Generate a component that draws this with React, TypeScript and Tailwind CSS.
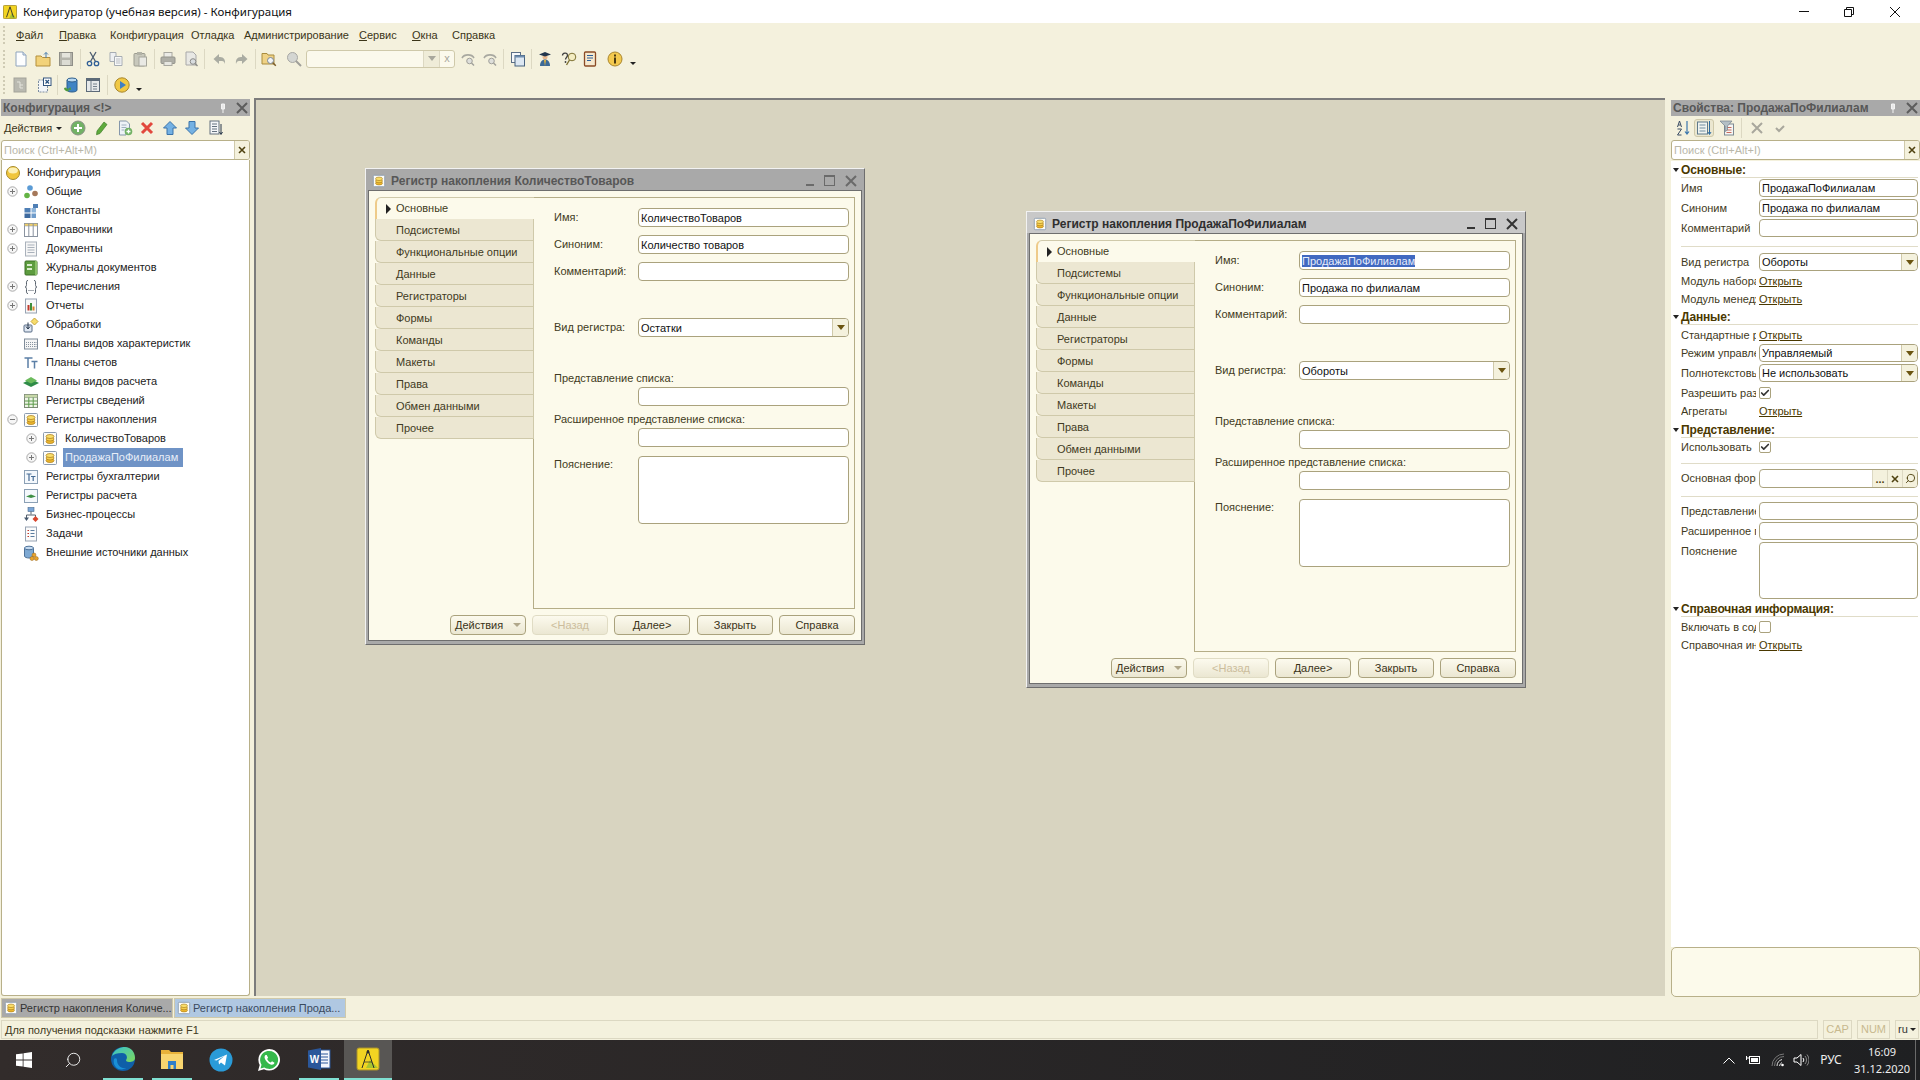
import { Check, Search } from 'lucide-react';
import type { ReactNode } from 'react';

// ---------- small drawn icons (16x16 unless noted) ----------
function Svg({ children, className = '' }: { children: ReactNode; className?: string }) {
  return (
    <svg viewBox="0 0 16 16" className={`block w-4 h-4 shrink-0 ${className}`}>
      {children}
    </svg>
  );
}

const Coins = ({ className = '' }: { className?: string }) => (
  <Svg className={className}>
    <rect x="1.5" y="1.5" width="13" height="13" rx="1" fill="#fdfdf8" stroke="#8b9bb0" />
    <ellipse cx="8" cy="10.5" rx="4" ry="2" fill="#efb92e" stroke="#a8791a" strokeWidth="0.7" />
    <ellipse cx="8" cy="8" rx="4" ry="2" fill="#f6d04d" stroke="#a8791a" strokeWidth="0.7" />
    <ellipse cx="8" cy="5.5" rx="4" ry="2" fill="#f9de6b" stroke="#a8791a" strokeWidth="0.7" />
  </Svg>
);

const treeIcons: Record<string, ReactNode> = {
  root: (
    <Svg>
      <circle cx="8" cy="8" r="6.5" fill="#f0c63c" stroke="#a68a2c" />
      <ellipse cx="8" cy="5.5" rx="4.8" ry="3" fill="#fcf0b4" />
    </Svg>
  ),
  common: (
    <Svg>
      <circle cx="7" cy="4" r="2.8" fill="#5b9bd5" />
      <circle cx="4" cy="11.5" r="2.8" fill="#64b345" />
      <circle cx="12" cy="9.5" r="2.8" fill="#a5785a" />
    </Svg>
  ),
  constants: (
    <Svg>
      <rect x="1.5" y="5" width="6" height="4.5" fill="#4f7fb5" />
      <rect x="1.5" y="10.5" width="6" height="4.5" fill="#3e6a9f" />
      <rect x="8.5" y="10.5" width="4.5" height="4.5" fill="#6f9ccb" />
      <rect x="8.5" y="5" width="4.5" height="4.5" fill="#8db4da" />
      <rect x="10" y="1" width="5" height="4" fill="#4f7fb5" />
    </Svg>
  ),
  catalogs: (
    <Svg>
      <rect x="1.5" y="1.5" width="13" height="13" fill="#fff" stroke="#8a93a0" />
      <rect x="1.5" y="1.5" width="13" height="2.5" fill="#f0cf6a" stroke="#8a93a0" strokeWidth="0.5" />
      <path d="M5.8 1.5v13M10.2 1.5v13" stroke="#8a93a0" />
    </Svg>
  ),
  docs: (
    <Svg>
      <rect x="2.5" y="1" width="11" height="14" fill="#f6f6f6" stroke="#a9b1bb" />
      <path d="M4.5 4h7M4.5 6.5h7M4.5 9h7M4.5 11.5h7" stroke="#a9b1bb" />
    </Svg>
  ),
  journals: (
    <Svg>
      <rect x="2" y="1" width="12" height="14" rx="1" fill="#5d9c3f" stroke="#3d7029" />
      <rect x="4" y="4" width="5" height="2" fill="#d8eccb" />
      <rect x="4" y="8" width="5" height="2" fill="#d8eccb" />
      <rect x="12" y="1" width="2" height="14" fill="#8bc069" />
    </Svg>
  ),
  enums: (
    <Svg>
      <path d="M5 1.5C3 1.5 3.5 3 3.5 5.5c0 1.5-.5 2.5-1.5 2.5 1 0 1.5 1 1.5 2.5 0 2.5-.5 4 1.500 4M11 1.500c2 0 1.500 1.500 1.500 4 0 1.500.5 2.500 1.500 2.500-1 0-1.500 1-1.500 2.500 0 2.500.5 4-1.500 4" fill="none" stroke="#505a66" />
      <path d="M5.500 11.500h1M7.500 11.500h1M9.500 11.500h1" stroke="#505a66" />
    </Svg>
  ),
  reports: (
    <Svg>
      <rect x="2.500" y="1" width="11" height="14" fill="#f8f8f8" stroke="#97a3b3" />
      <rect x="4.500" y="7" width="2" height="5.500" fill="#c0392b" />
      <rect x="7" y="5" width="2" height="7.500" fill="#3f8f3a" />
      <rect x="9.500" y="8.500" width="2" height="4" fill="#d9822b" />
    </Svg>
  ),
  processing: (
    <Svg>
      <rect x="1" y="8" width="8" height="7" rx="1" fill="#dfe7f2" stroke="#566b85" />
      <path d="M5 5.500v6M3 9.500l2 2.500 2-2.500" fill="none" stroke="#26364a" />
      <path d="M11.500 1l3.500 3.500-3.500 3.500L8 4.500z" fill="#f7dc6c" stroke="#c5a63a" />
    </Svg>
  ),
  charKinds: (
    <Svg>
      <rect x="1.500" y="3" width="13" height="10" fill="#f5f5f5" stroke="#7f8b99" />
      <path d="M3.500 6v5M5.500 6v5M7.500 6v5M9.500 6v5M11.500 6v5M13 6v5" stroke="#8994a0" strokeDasharray="1 1" />
    </Svg>
  ),
  accounts: (
    <Svg>
      <path d="M1.500 3h8M5 3v10M8.500 6.500h6M11.500 6.500v7" fill="none" stroke="#5b7fa6" strokeWidth="1.500" />
    </Svg>
  ),
  calcKinds: (
    <Svg>
      <path d="M0 9l8-4 8 4-8 4z" fill="#2e8b47" />
      <path d="M2 6.500L8 3l6 3.500-6 3z" fill="#6cbb5d" />
    </Svg>
  ),
  infoRegs: (
    <Svg>
      <rect x="1.500" y="1.500" width="13" height="13" fill="#eef4e6" stroke="#7e8a78" />
      <rect x="1.500" y="1.500" width="13" height="3" fill="#c7d8a8" stroke="#7e8a78" strokeWidth="0.5" />
      <path d="M1.500 8h13M1.500 11.200h13M5.800 4.500v10M10.200 4.500v10" stroke="#5c9a4a" />
    </Svg>
  ),
  coins: <Coins />,
  accReg: (
    <Svg>
      <rect x="1.500" y="1.500" width="13" height="13" fill="#f4f8fc" stroke="#8ba0b5" />
      <path d="M3.500 5h5M6 5v7M8 7.500h4.500M10.200 7.500v4.500" fill="none" stroke="#466c95" strokeWidth="1.200" />
    </Svg>
  ),
  calcReg: (
    <Svg>
      <rect x="1.500" y="1.500" width="13" height="13" fill="#f4f8fc" stroke="#8ba0b5" />
      <path d="M3 8.500l5-2 5 2-5 1.500z" fill="#3d8f45" />
    </Svg>
  ),
  bp: (
    <Svg>
      <rect x="5" y="0.500" width="6" height="4" fill="#7aa5d6" stroke="#46698f" strokeWidth="0.6" />
      <path d="M8 4.500v3M3.500 11V8h9v3" fill="none" stroke="#56606c" />
      <path d="M1 10.500h5L3.500 14z" fill="#46586e" />
      <path d="M12.500 9l3 3-3 3-3-3z" fill="#d9452c" />
    </Svg>
  ),
  tasks: (
    <Svg>
      <rect x="2.500" y="1" width="11" height="14" fill="#fbfbfb" stroke="#97a3b3" />
      <path d="M4.500 4.500h1.500M4.500 7.500h1.500M4.500 10.500h1.500" stroke="#c0392b" />
      <path d="M7.500 4.500h4M7.500 7.500h4M7.500 10.500h4" stroke="#5c7da0" />
    </Svg>
  ),
  ext: (
    <Svg>
      <path d="M1.500 3v8c0 1.200 2 2 4.500 2s4.500-.8 4.500-2V3z" fill="#7ea9d3" stroke="#4f7299" />
      <ellipse cx="6" cy="3" rx="4.500" ry="1.800" fill="#c4daf0" stroke="#4f7299" />
      <circle cx="11" cy="10" r="2" fill="#e8a32c" stroke="#96651a" strokeWidth="0.5" />
      <circle cx="9" cy="13.500" r="2" fill="#e8a32c" stroke="#96651a" strokeWidth="0.5" />
      <circle cx="13.300" cy="13.500" r="2" fill="#e8a32c" stroke="#96651a" strokeWidth="0.5" />
    </Svg>
  ),
};

// toolbar drawings, mostly greyed out as in a disabled toolbar
const tb: Record<string, ReactNode> = {
  newDoc: (
    <Svg>
      <path d="M3 1h7l3 3v11H3z" fill="#fdfeff" stroke="#8fa4bd" />
      <path d="M10 1v3h3" fill="#dbe6f2" stroke="#8fa4bd" />
    </Svg>
  ),
  open: (
    <Svg>
      <path d="M1 5h5l1.500 1.500H15V15H1z" fill="#f2d27a" stroke="#b38f3c" />
      <path d="M11 7V1.500M9 3.500l2-2 2 2" fill="none" stroke="#4b7fb0" />
    </Svg>
  ),
  save: (
    <Svg>
      <rect x="1.500" y="1.500" width="13" height="13" fill="#b5b5ac" stroke="#8f8f88" />
      <rect x="4" y="2" width="8" height="4.500" fill="#e4e4dc" />
      <rect x="4" y="9" width="8" height="5" fill="#dcdcd4" />
    </Svg>
  ),
  cut: (
    <Svg>
      <path d="M5 1l5.500 9.500M11 1L5.500 10.500" stroke="#4c5c70" strokeWidth="1.300" fill="none" />
      <circle cx="4.500" cy="12.500" r="2.200" fill="none" stroke="#2f5e96" strokeWidth="1.300" />
      <circle cx="11.500" cy="12.500" r="2.200" fill="none" stroke="#2f5e96" strokeWidth="1.300" />
    </Svg>
  ),
  copy: (
    <Svg>
      <path d="M2 1.500h6v9H2z" fill="#eef0f2" stroke="#a7adb3" />
      <path d="M6.500 5.500h7.500v9H6.500z" fill="#f7f8f9" stroke="#a7adb3" />
      <path d="M8 8h4.500M8 10h4.500M8 12h4.500" stroke="#b8bcc1" />
    </Svg>
  ),
  paste: (
    <Svg>
      <rect x="2" y="2.500" width="11" height="12.500" rx="1" fill="#c8c8bc" stroke="#9c9c90" />
      <rect x="5" y="1" width="5" height="3" fill="#b2b2a6" />
      <rect x="7" y="6" width="7.500" height="9" fill="#e9e9e4" stroke="#a6a69c" />
    </Svg>
  ),
  print: (
    <Svg>
      <rect x="4" y="1.500" width="8" height="5" fill="#ebebe6" stroke="#a8a8a0" />
      <rect x="1" y="6" width="14" height="6.500" rx="1" fill="#aeaea6" stroke="#94948c" />
      <rect x="4" y="10.500" width="8" height="4" fill="#e6e6e0" stroke="#a8a8a0" />
    </Svg>
  ),
  preview: (
    <Svg>
      <path d="M3 1h7l3 3v10H3z" fill="#e8e8e4" stroke="#a8a8a8" />
      <circle cx="10" cy="10.500" r="2.800" fill="#d8dcdf" stroke="#8c8c88" />
      <path d="M12 12.500l2.500 2.500" stroke="#8c8c88" strokeWidth="1.400" />
    </Svg>
  ),
  undo: (
    <Svg>
      <path d="M7 3L1.500 8 7 13V10h3c1.500 0 2.500 1 3 3 .5-4-1-7-5-7H7z" fill="#aaaca2" />
    </Svg>
  ),
  redo: (
    <Svg>
      <path d="M9 3l5.500 5L9 13V10H6c-1.500 0-2.500 1-3 3-.5-4 1-7 5-7h1z" fill="#aaaca2" />
    </Svg>
  ),
  find: (
    <Svg>
      <path d="M1 2.500h5l1 1.500h6v9H1z" fill="#efd285" stroke="#a98c3e" />
      <circle cx="9.500" cy="9.500" r="3" fill="#f2f4f6" stroke="#7b8794" />
      <path d="M11.800 11.800l3 3" stroke="#7b5d2a" strokeWidth="1.500" />
    </Svg>
  ),
  magnify: (
    <Svg>
      <circle cx="6.500" cy="6.500" r="5" fill="#d4d6d2" stroke="#a8a8a4" />
      <path d="M10 10l5 5" stroke="#a0a09a" strokeWidth="2" />
    </Svg>
  ),
  searchBack: (
    <Svg>
      <path d="M2 7a6.500 5 0 0 1 12 0" fill="none" stroke="#a8a8a0" strokeWidth="1.600" />
      <circle cx="9.500" cy="10" r="2.800" fill="#dedfdb" stroke="#a0a09a" />
      <path d="M11.500 12l2.500 2.500" stroke="#a0a09a" strokeWidth="1.400" />
    </Svg>
  ),
  windows: (
    <Svg>
      <rect x="1.500" y="1.500" width="9" height="10" fill="#f6f8fa" stroke="#5c6f86" />
      <rect x="5" y="4.500" width="9.500" height="10.500" fill="#dce7f2" stroke="#47627f" />
      <rect x="5" y="4.500" width="9.500" height="2" fill="#6d8cae" />
    </Svg>
  ),
  study: (
    <Svg>
      <circle cx="8" cy="6" r="2.500" fill="#eab98f" />
      <path d="M2 3.500L8 1l6 2.500L8 5.500z" fill="#22364d" />
      <path d="M3 15c0-4 2-6.500 5-6.500S13 11 13 15z" fill="#3c6a97" />
      <path d="M7 9l1 6 1-6z" fill="#e6b63d" />
    </Svg>
  ),
  helpSearch: (
    <Svg>
      <path d="M1.500 4.500C1.500 2 6 1 6.500 4c.3 2-2 2.500-2 4.500" fill="none" stroke="#3f3f3f" strokeWidth="1.300" />
      <circle cx="4.500" cy="11" r="0.900" fill="#3f3f3f" />
      <circle cx="11" cy="6" r="3.800" fill="#f4edc2" stroke="#7e7132" />
      <path d="M8.500 9l-3 5" stroke="#7e7132" strokeWidth="1.400" />
    </Svg>
  ),
  book: (
    <Svg>
      <rect x="2.500" y="1" width="11" height="14" rx="1" fill="#f6e9cf" stroke="#8a4b26" strokeWidth="1.300" />
      <path d="M5 4.500h6M5 7h6M5 9.500h4" stroke="#2c5f9a" />
    </Svg>
  ),
  info: (
    <Svg>
      <circle cx="8" cy="8" r="7" fill="#f3c94e" stroke="#a9862e" />
      <rect x="7" y="6.500" width="2" height="6" fill="#4a3a10" />
      <rect x="7" y="3.500" width="2" height="2" fill="#4a3a10" />
    </Svg>
  ),
  tree: (
    <Svg>
      <rect x="2" y="1" width="12" height="14" fill="#b9b9b0" stroke="#a3a39a" />
      <path d="M5 5h3v6h3M8 8h3" fill="none" stroke="#e4e4dc" />
    </Svg>
  ),
  docX: (
    <Svg>
      <path d="M2.500 3h9v12h-9z" fill="#f3f6f9" stroke="#7d8da0" strokeDasharray="2 1" />
      <rect x="7.500" y="1" width="7.500" height="7.500" fill="#fff" stroke="#33557e" />
      <path d="M9.500 3l3.500 3.500M13 3L9.500 6.500" stroke="#27507f" strokeWidth="1.200" />
    </Svg>
  ),
  db: (
    <Svg>
      <path d="M4 3v10c0 1.200 2 2 5 2s5-.8 5-2V3z" fill="#3f83c4" stroke="#2c5d8c" />
      <ellipse cx="9" cy="3" rx="5" ry="2" fill="#b8d8f0" stroke="#2c5d8c" />
      <path d="M1 11a3.500 3.500 0 0 0 5 3l-1-1.500 3 .5-.5-3-1 1a2 2 0 0 1-3.500-.5z" fill="#4e9a3c" />
    </Svg>
  ),
  table: (
    <Svg>
      <rect x="1.500" y="1.500" width="13" height="13" fill="#e6e9ea" stroke="#5c6a78" />
      <rect x="1.500" y="1.500" width="13" height="2.500" fill="#5c6a78" />
      <path d="M6 4v10.500M8 7h4M8 9.500h4M8 12h4" stroke="#76828d" />
    </Svg>
  ),
  play: (
    <Svg>
      <circle cx="8" cy="8" r="7.200" fill="#f0c844" stroke="#a8862c" />
      <path d="M6 4l6 4-6 4z" fill="#3f7fc4" />
    </Svg>
  ),
  plus: (
    <Svg>
      <circle cx="8" cy="8" r="7" fill="#72b265" stroke="#8b9186" />
      <path d="M8 4v8M4 8h8" stroke="#fff" strokeWidth="2" />
    </Svg>
  ),
  pencil: (
    <Svg>
      <path d="M3 11l7-9 3 2.500-7 9-3.500 1.200z" fill="#5eaa3c" stroke="#3f7e2a" strokeWidth="0.7" />
    </Svg>
  ),
  addDoc: (
    <Svg>
      <path d="M2.500 1h7l3 3v5H9v6H2.500z" fill="#eef3f7" stroke="#8597ab" />
      <path d="M4.500 5h5M4.500 7.500h5M4.500 10h3" stroke="#9fb0c0" />
      <circle cx="11.500" cy="11.500" r="3.800" fill="#72b265" />
      <path d="M11.500 9.500v4M9.500 11.500h4" stroke="#fff" strokeWidth="1.300" />
    </Svg>
  ),
  del: (
    <Svg>
      <path d="M3 3l10 10M13 3L3 13" stroke="#e2483d" strokeWidth="3" />
    </Svg>
  ),
  up: (
    <Svg>
      <path d="M8 1.500L14.500 8H11v6.500H5V8H1.500z" fill="#74b1e3" stroke="#3a73aa" />
    </Svg>
  ),
  down: (
    <Svg>
      <path d="M8 14.500L14.500 8H11V1.500H5V8H1.500z" fill="#74b1e3" stroke="#3a73aa" />
    </Svg>
  ),
  list: (
    <Svg>
      <rect x="2" y="1" width="9" height="13" fill="#f4f6f8" stroke="#63717f" />
      <path d="M4 4h5M4 6.500h5M4 9h5M4 11.500h5" stroke="#63717f" />
      <path d="M13 4v10M11.500 12l1.500 2.500 1.500-2.500" fill="none" stroke="#27364a" />
    </Svg>
  ),
  sortAz: (
    <Svg>
      <path d="M1.500 7l2-6 2 6M2.300 5h2.400M1.500 9h4L1.500 15h4" fill="none" stroke="#3a4c64" />
      <path d="M11 1v13M9 11.500l2 2.500 2-2.500" fill="none" stroke="#3976ad" strokeWidth="1.200" />
    </Svg>
  ),
  groupProps: (
    <Svg>
      <rect x="1.500" y="2" width="10" height="12" fill="#f0f3ef" stroke="#5f7a8c" />
      <path d="M3.500 5h6M3.500 8h6M3.500 11h6" stroke="#6e8ca0" />
      <path d="M13.500 1v13M12 12l1.500 2.500L15 12" fill="none" stroke="#2d6ca3" />
    </Svg>
  ),
  filter: (
    <Svg>
      <rect x="5.500" y="4" width="9" height="11" fill="#f6f6f4" stroke="#7d8992" />
      <path d="M7.500 7.500h5M7.500 10h5M7.500 12.500h5" stroke="#c96b5c" />
      <path d="M1 1h12L8.500 6v4L6 11.500V6z" fill="#b4bfc5" stroke="#75838c" strokeWidth="0.7" />
    </Svg>
  ),
  grayX: (
    <Svg>
      <path d="M3 3l10 10M13 3L3 13" stroke="#a8a79c" strokeWidth="2" />
    </Svg>
  ),
  grayCheck: (
    <Svg>
      <path d="M4 8l3 3 5-5" fill="none" stroke="#a8a79c" strokeWidth="2" />
    </Svg>
  ),
};

// ---------- shared bits ----------
const Grip = () => <div className="ml-[3px] w-[2px] h-[18px] border-l-2 border-dotted border-[#cfcbb4] shrink-0" />;
const Sep = ({ className = '' }: { className?: string }) => <div className={`w-px h-[20px] bg-[#dcd8c2] shrink-0 ${className}`} />;
const Caret = ({ className = '' }: { className?: string }) => (
  <div className={`w-0 h-0 border-x-[3px] border-x-transparent border-t-[3px] border-t-[#222] shrink-0 ${className}`} />
);
const DropBtn = () => (
  <div className="w-[16px] h-full flex items-center justify-center border-l border-[#cfc9aa] bg-[#f4f1dd] rounded-r-[3px] shrink-0">
    <div className="w-0 h-0 border-x-[4px] border-x-transparent border-t-[5px] border-t-[#6b5410]" />
  </div>
);
const CloseGlyph = ({ color }: { color: string }) => (
  <svg viewBox="0 0 12 12" className="block w-3 h-3">
    <path d="M1 1l10 10M11 1L1 11" stroke={color} strokeWidth="2" />
  </svg>
);

function Menu() {
  return (
    <div className="h-[23px] pt-px flex items-center text-[#3b3518] shrink-0">
      <Grip />
      <span className="ml-[11px] w-[43px]"><u>Ф</u>айл</span>
      <span className="w-[51px]"><u>П</u>равка</span>
      <span className="w-[81px]">Конфигурация</span>
      <span className="w-[53px]">Отладка</span>
      <span className="w-[115px]">Администрирование</span>
      <span className="w-[53px]"><u>С</u>ервис</span>
      <span className="w-[40px]"><u>О</u>кна</span>
      <span>Сп<u>р</u>авка</span>
    </div>
  );
}

function Toolbars() {
  return (
    <>
      <div className="h-[25px] flex items-center shrink-0">
        <Grip />
        <div className="ml-[8px]">{tb.newDoc}</div>
        <div className="ml-[6px]">{tb.open}</div>
        <div className="ml-[7px]">{tb.save}</div>
        <Sep className="ml-[6px]" />
        <div className="ml-[4px]">{tb.cut}</div>
        <div className="ml-[7px]">{tb.copy}</div>
        <div className="ml-[8px]">{tb.paste}</div>
        <Sep className="ml-[6px]" />
        <div className="ml-[5px]">{tb.print}</div>
        <div className="ml-[7px]">{tb.preview}</div>
        <Sep className="ml-[5px]" />
        <div className="ml-[7px]">{tb.undo}</div>
        <div className="ml-[5px]">{tb.redo}</div>
        <Sep className="ml-[6px]" />
        <div className="ml-[5px]">{tb.find}</div>
        <div className="ml-[9px]">{tb.magnify}</div>
        <div className="ml-[4px] w-[149px] h-[18px] flex border border-[#cfc9aa] rounded-[3px] bg-[#fbf9ec] overflow-hidden">
          <div className="flex-1" />
          <div className="w-[16px] flex items-center justify-center border-l border-[#dcd8c2] bg-[#efecd8]">
            <div className="w-0 h-0 border-x-[4px] border-x-transparent border-t-[5px] border-t-[#a8a79c]" />
          </div>
          <div className="w-[15px] flex items-center justify-center border-l border-[#dcd8c2] text-[#a8a79c] text-[11px]">x</div>
        </div>
        <div className="ml-[5px]">{tb.searchBack}</div>
        <div className="ml-[6px]">{tb.searchBack}</div>
        <Sep className="ml-[5px]" />
        <div className="ml-[6px]">{tb.windows}</div>
        <Sep className="ml-[5px]" />
        <div className="ml-[5px]">{tb.study}</div>
        <div className="ml-[8px]">{tb.helpSearch}</div>
        <div className="ml-[5px]">{tb.book}</div>
        <div className="ml-[9px]">{tb.info}</div>
        <Caret className="ml-[7px] mt-[10px]" />
      </div>
      <div className="h-[27px] flex items-center shrink-0">
        <Grip />
        <div className="ml-[7px]">{tb.tree}</div>
        <div className="ml-[8px]">{tb.docX}</div>
        <Sep className="ml-[5px]" />
        <div className="ml-[5px]">{tb.db}</div>
        <div className="ml-[6px]">{tb.table}</div>
        <Sep className="ml-[6px]" />
        <div className="ml-[6px]">{tb.play}</div>
        <Caret className="ml-[6px] mt-[10px]" />
      </div>
    </>
  );
}

function PanelHeader({ title }: { title: string }) {
  return (
    <div className="flex items-center h-full bg-[#a9a9a9] text-[#575757] text-[12px] font-bold pl-[2px]">
      <span className="flex-1">{title}</span>
      <svg viewBox="0 0 6 10" className="block w-[6px] h-[10px] mr-[10px]">
        <path d="M1.500 1h3v5h-3zM3 6v4" fill="#e8e8e8" stroke="#f4f4f4" />
      </svg>
      <div className="mr-[2px]"><CloseGlyph color="#5c5c5c" /></div>
    </div>
  );
}

function SearchBox({ text }: { text: string }) {
  return (
    <div className="h-[20px] flex border border-[#b8b089] rounded-[3px] bg-white overflow-hidden shrink-0">
      <span className="flex-1 pl-[2px] leading-[18px] text-[#b9b7a9]">{text}</span>
      <div className="w-[15px] flex items-center justify-center border-l border-[#cfc9aa] bg-[#f4f1dd]">
        <svg viewBox="0 0 8 8" className="block w-2 h-2">
          <path d="M1 1l6 6M7 1L1 7" stroke="#4f4210" strokeWidth="1.600" />
        </svg>
      </div>
    </div>
  );
}

// ---------- configuration tree ----------
const Expander = ({ open }: { open?: boolean }) => (
  <svg viewBox="0 0 11 11" className="block w-[11px] h-[11px]">
    <circle cx="5.500" cy="5.500" r="4.700" fill="#f6f6f6" stroke="#a9a9a9" />
    <path d={open ? 'M3 5.500h5' : 'M3 5.500h5M5.500 3v5'} stroke="#777" />
  </svg>
);

const treeRows: { label: string; icon: string; expander?: boolean; open?: boolean }[] = [
  { label: 'Общие', icon: 'common', expander: true },
  { label: 'Константы', icon: 'constants' },
  { label: 'Справочники', icon: 'catalogs', expander: true },
  { label: 'Документы', icon: 'docs', expander: true },
  { label: 'Журналы документов', icon: 'journals' },
  { label: 'Перечисления', icon: 'enums', expander: true },
  { label: 'Отчеты', icon: 'reports', expander: true },
  { label: 'Обработки', icon: 'processing' },
  { label: 'Планы видов характеристик', icon: 'charKinds' },
  { label: 'Планы счетов', icon: 'accounts' },
  { label: 'Планы видов расчета', icon: 'calcKinds' },
  { label: 'Регистры сведений', icon: 'infoRegs' },
  { label: 'Регистры накопления', icon: 'coins', expander: true, open: true },
];

const treeTail: { label: string; icon: string }[] = [
  { label: 'Регистры бухгалтерии', icon: 'accReg' },
  { label: 'Регистры расчета', icon: 'calcReg' },
  { label: 'Бизнес-процессы', icon: 'bp' },
  { label: 'Задачи', icon: 'tasks' },
  { label: 'Внешние источники данных', icon: 'ext' },
];

function TreeRow({ label, icon, expander, open }: { label: string; icon: string; expander?: boolean; open?: boolean }) {
  return (
    <div className="h-[19px] flex items-center pl-[4px] whitespace-nowrap">
      <div className="w-[12px] flex justify-center">{expander && <Expander open={open} />}</div>
      <div className="ml-[5px]">{treeIcons[icon]}</div>
      <span className="ml-[7px]">{label}</span>
    </div>
  );
}

function SubRow({ label, selected }: { label: string; selected?: boolean }) {
  return (
    <div className="h-[19px] flex items-center pl-[23px] whitespace-nowrap">
      <div className="w-[12px] flex justify-center"><Expander /></div>
      <div className="ml-[5px]"><Coins /></div>
      <span className={`ml-[5px] px-[2px] h-[19px] leading-[19px] ${selected ? 'bg-[#6f93c6] text-[#e8eef8] w-[120px]' : ''}`}>{label}</span>
    </div>
  );
}

function LeftPanel() {
  return (
    <div className="w-[250px] pl-px flex flex-col pt-px pb-[2px] shrink-0">
      <div className="h-[17px] shrink-0"><PanelHeader title="Конфигурация <!>" /></div>
      <div className="h-[24px] flex items-center pl-[3px] text-[#3b3518] shrink-0">
        <span>Действия</span>
        <Caret className="ml-[4px]" />
        <div className="ml-[8px]">{tb.plus}</div>
        <div className="ml-[8px]">{tb.pencil}</div>
        <div className="ml-[7px]">{tb.addDoc}</div>
        <div className="ml-[6px]">{tb.del}</div>
        <div className="ml-[7px]">{tb.up}</div>
        <div className="ml-[6px]">{tb.down}</div>
        <div className="ml-[8px]">{tb.list}</div>
      </div>
      <SearchBox text="Поиск (Ctrl+Alt+M)" />
      <div className="flex-1 bg-white border border-[#b8b089] border-t-0 rounded-b-[3px] pt-[3px] text-[#222]">
        <div className="h-[19px] flex items-center pl-[3px] whitespace-nowrap">
          {treeIcons.root}
          <span className="ml-[6px]">Конфигурация</span>
        </div>
        {treeRows.map((r) => (
          <TreeRow key={r.label} {...r} />
        ))}
        <SubRow label="КоличествоТоваров" />
        <SubRow label="ПродажаПоФилиалам" selected />
        {treeTail.map((r) => (
          <TreeRow key={r.label} {...r} />
        ))}
      </div>
    </div>
  );
}

// ---------- register windows ----------
const tabs = ['Подсистемы', 'Функциональные опции', 'Данные', 'Регистраторы', 'Формы', 'Команды', 'Макеты', 'Права', 'Обмен данными', 'Прочее'];

function Input({ children, className = '', h = 'h-[19px]' }: { children?: ReactNode; className?: string; h?: string }) {
  return (
    <div className={`${h} flex border border-[#aaa27d] rounded-[4px] bg-white overflow-hidden text-[#111] ${className}`}>
      <div className="flex-1 pl-[2px] leading-[18px] whitespace-nowrap">{children}</div>
    </div>
  );
}

function FormField({ label, mt, children }: { label: string; mt: string; children: ReactNode }) {
  return (
    <div className={`flex items-center ${mt}`}>
      <span className="w-[84px] whitespace-nowrap">{label}</span>
      <div className="w-[211px]">{children}</div>
    </div>
  );
}

function WinBtn({ children, disabled }: { children: ReactNode; disabled?: boolean }) {
  return (
    <div className={`w-[76px] h-[20px] flex items-center justify-center rounded-[4px] border bg-gradient-to-b from-[#fcfaee] to-[#ebe7d2] ${disabled ? 'border-[#e0dcc4] text-[#ccbd9c]' : 'border-[#aaa27d] text-[#3a3318]'}`}>
      {children}
    </div>
  );
}

function RegisterWindow({ pos, title, name, synonym, kind, active }: { pos: string; title: string; name: string; synonym: string; kind: string; active?: boolean }) {
  const winColor = active ? '#333333' : '#6a6a6a';
  return (
    <div className={`absolute ${pos} w-[500px] h-[477px] flex flex-col border border-[#6e6e6e] border-l-[#f2f2f2] border-t-[#f2f2f2] bg-[#a9a9a9] px-[2px] pb-[3px]`}>
      <div className={`h-[21px] shrink-0 -mx-[2px] flex items-center pl-[6px] pt-[2px] text-[12px] font-bold ${active ? 'bg-[#c8c8c8] text-[#2f2f2f]' : 'bg-[#a9a9a9] text-[#575757]'}`}>
        <Coins className="w-[14px] h-[14px]" />
        <span className="ml-[5px] flex-1">{title}</span>
        <div className="w-[8px] h-[2px] mt-[8px] mr-[10px]" style={{ backgroundColor: winColor }} />
        <div className="w-[11px] h-[11px] border border-t-2 mr-[10px]" style={{ borderColor: winColor }} />
        <div className="mr-[7px]"><CloseGlyph color={winColor} /></div>
      </div>
      <div className="flex-1 flex flex-col border border-[#6e6e6e] bg-[#fcfaeb] pt-[6px] pl-[6px] pr-[6px] text-[#3f3a22]">
        <div className="flex h-[412px] shrink-0">
          <div className="w-[159px] flex flex-col shrink-0">
            <div className="h-[22px] flex items-center pl-[9px] border-t border-l-2 border-t-[#cfc9aa] border-l-[#eecb8a] rounded-tl-[6px] shrink-0">
              <div className="w-0 h-0 border-y-[5px] border-y-transparent border-l-[5px] border-l-[#222]" />
              <span className="ml-[5px]">Основные</span>
            </div>
            {tabs.map((t) => (
              <div key={t} className="h-[22px] flex items-center pl-[20px] pt-px bg-[#ece7d2] border-l border-b border-r border-[#cfc9aa] rounded-bl-[6px] shrink-0">
                {t}
              </div>
            ))}
            <div className="flex-1 border-r border-[#b5ad87]" />
          </div>
          <div className="flex-1 border-t border-r border-b border-[#b5ad87] pl-[20px]">
            <FormField label="Имя:" mt="mt-[10px]">
              <Input>{active ? <span className="bg-[#4169c1] text-[#e6ecfa]">{name}</span> : name}</Input>
            </FormField>
            <FormField label="Синоним:" mt="mt-[8px]"><Input>{synonym}</Input></FormField>
            <FormField label="Комментарий:" mt="mt-[8px]"><Input /></FormField>
            <FormField label="Вид регистра:" mt="mt-[37px]">
              <div className="h-[19px] flex border border-[#aaa27d] rounded-[4px] bg-white overflow-hidden text-[#111]">
                <div className="flex-1 pl-[2px] leading-[18px]">{kind}</div>
                <DropBtn />
              </div>
            </FormField>
            <div className="mt-[33px] h-[16px] leading-[16px]">Представление списка:</div>
            <div className="mt-px ml-[84px] w-[211px]"><Input /></div>
            <div className="mt-[5px] h-[16px] leading-[16px]">Расширенное представление списка:</div>
            <div className="mt-px ml-[84px] w-[211px]"><Input /></div>
            <div className="mt-[9px] flex">
              <span className="w-[84px]">Пояснение:</span>
              <div className="w-[211px]"><Input h="h-[68px]" /></div>
            </div>
          </div>
        </div>
        <div className="mt-[6px] flex justify-end gap-[6px]">
          <div className="w-[76px] h-[20px] flex items-center pl-[4px] rounded-[4px] border border-[#aaa27d] bg-gradient-to-b from-[#fcfaee] to-[#ebe7d2] text-[#3a3318]">
            <span className="flex-1">Действия</span>
            <div className="w-0 h-0 mr-[4px] border-x-[4px] border-x-transparent border-t-[4px] border-t-[#b0a78a]" />
          </div>
          <WinBtn disabled>&lt;Назад</WinBtn>
          <WinBtn>Далее&gt;</WinBtn>
          <div className="ml-px"><WinBtn>Закрыть</WinBtn></div>
          <WinBtn>Справка</WinBtn>
        </div>
      </div>
    </div>
  );
}

// ---------- properties panel ----------
function PropHeading({ title, mt = '' }: { title: string; mt?: string }) {
  return (
    <div className={`relative h-[17px] ml-[10px] border-b border-[#e0dcc8] font-bold text-[12px] tracking-[-0.15px] text-[#4a3800] leading-[18px] ${mt}`}>
      <div className="absolute left-[-8px] top-[7px] w-0 h-0 border-x-[3px] border-x-transparent border-t-[4px] border-t-[#222]" />
      {title}:
    </div>
  );
}

function PropRow({ label, mt = '', h = 'h-[18px]', top, children }: { label: string; mt?: string; h?: string; top?: boolean; children?: ReactNode }) {
  return (
    <div className={`flex ${h} ml-[10px] ${top ? 'items-start' : 'items-center'} ${mt}`}>
      <span className={`w-[75px] overflow-hidden whitespace-nowrap shrink-0 ${top ? 'pt-px' : ''}`}>{label}</span>
      <div className="ml-[3px] flex-1 h-full flex items-center">{children}</div>
    </div>
  );
}

const PropInput = ({ value, tall }: { value?: string; tall?: boolean }) => (
  <div className={`w-full ${tall ? 'h-[57px]' : 'h-[18px]'} border border-[#aaa27d] rounded-[4px] bg-white pl-[2px] leading-[17px] text-[#111]`}>{value}</div>
);
const PropSelect = ({ value }: { value: string }) => (
  <div className="w-full h-[18px] flex border border-[#aaa27d] rounded-[4px] bg-white overflow-hidden text-[#111]">
    <span className="flex-1 pl-[2px] leading-[17px]">{value}</span>
    <DropBtn />
  </div>
);
const Link = () => <span className="underline text-[#4a3800]">Открыть</span>;
const CheckBox = ({ on }: { on?: boolean }) => (
  <div className="w-[12px] h-[12px] flex items-center justify-center border border-[#aaa27d] rounded-[2px] bg-white">
    {on && <Check className="w-[10px] h-[10px] text-[#333]" strokeWidth={4} />}
  </div>
);
const Hr = ({ mt }: { mt: string }) => <div className={`h-px ml-[10px] bg-[#e0dcc8] ${mt}`} />;

function PropertiesPanel() {
  return (
    <div className="w-[249px] flex flex-col pt-[2px] pb-px shrink-0">
      <div className="h-[16px] shrink-0"><PanelHeader title="Свойства: ПродажаПоФилиалам" /></div>
      <div className="h-[24px] flex items-center pl-[4px] shrink-0">
        <div className="ml-[1px]">{tb.sortAz}</div>
        <div className="ml-[2px] w-[20px] h-[18px] flex items-center justify-center border border-[#cfc9aa] rounded-[3px] bg-[#ebe7d0]">{tb.groupProps}</div>
        <div className="ml-[5px]">{tb.filter}</div>
        <Sep className="ml-[6px]" />
        <div className="ml-[7px]">{tb.grayX}</div>
        <div className="ml-[7px]">{tb.grayCheck}</div>
      </div>
      <SearchBox text="Поиск (Ctrl+Alt+I)" />
      <div className="flex-1 bg-white pr-[2px] mt-px text-[#3f3a22]">
        <PropHeading title="Основные" />
        <PropRow label="Имя" mt="mt-px"><PropInput value="ПродажаПоФилиалам" /></PropRow>
        <PropRow label="Синоним" mt="mt-[2px]"><PropInput value="Продажа по филиалам" /></PropRow>
        <PropRow label="Комментарий" mt="mt-[2px]"><PropInput /></PropRow>
        <Hr mt="mt-[9px]" />
        <PropRow label="Вид регистра" mt="mt-[6px]"><PropSelect value="Обороты" /></PropRow>
        <PropRow label="Модуль набора" mt="mt-px"><Link /></PropRow>
        <PropRow label="Модуль менедж"><Link /></PropRow>
        <PropHeading title="Данные" />
        <PropRow label="Стандартные р" mt="mt-px"><Link /></PropRow>
        <PropRow label="Режим управле"><PropSelect value="Управляемый" /></PropRow>
        <PropRow label="Полнотекстовы" mt="mt-[2px]"><PropSelect value="Не использовать" /></PropRow>
        <PropRow label="Разрешить раз" mt="mt-[2px]"><CheckBox on /></PropRow>
        <PropRow label="Агрегаты"><Link /></PropRow>
        <PropHeading title="Представление" mt="mt-px" />
        <PropRow label="Использовать"><CheckBox on /></PropRow>
        <Hr mt="mt-[7px]" />
        <PropRow label="Основная форм" mt="mt-[5px]" h="h-[19px]">
          <div className="w-full h-[19px] flex border border-[#aaa27d] rounded-[4px] bg-white overflow-hidden text-[#4f4210]">
            <div className="flex-1" />
            <div className="w-[15px] flex items-end justify-center border-l border-[#dcd8c2] bg-[#f4f1dd] font-bold leading-[16px]">...</div>
            <div className="w-[15px] flex items-center justify-center border-l border-[#dcd8c2] bg-[#f4f1dd]">
              <svg viewBox="0 0 8 8" className="block w-2 h-2"><path d="M1 1l6 6M7 1L1 7" stroke="#4f4210" strokeWidth="1.600" /></svg>
            </div>
            <div className="w-[15px] flex items-center justify-center border-l border-[#dcd8c2] bg-[#f4f1dd]">
              <Search className="w-[11px] h-[11px] -scale-x-100" strokeWidth={2} />
            </div>
          </div>
        </PropRow>
        <Hr mt="mt-[8px]" />
        <PropRow label="Представление" mt="mt-[5px]"><PropInput /></PropRow>
        <PropRow label="Расширенное п" mt="mt-[2px]"><PropInput /></PropRow>
        <PropRow label="Пояснение" mt="mt-[2px]" h="h-[57px]" top><PropInput tall /></PropRow>
        <PropHeading title="Справочная информация" mt="mt-px" />
        <PropRow label="Включать в сод" mt="mt-px"><CheckBox /></PropRow>
        <PropRow label="Справочная ин"><Link /></PropRow>
      </div>
      <div className="h-[50px] border border-[#b8b089] rounded-[5px] bg-[#fcfaeb] shrink-0" />
    </div>
  );
}

// ---------- windows taskbar ----------
function Taskbar() {
  return (
    <div className="h-[40px] flex items-stretch bg-gradient-to-r from-[#322c2b] to-[#1f2022] text-[#eeeeee] font-['Noto_Sans',sans-serif] shrink-0">
      <div className="w-[48px] flex items-center justify-center">
        <svg viewBox="0 0 16 16" className="block w-4 h-4">
          <path d="M0 2.300l6.700-.9v6.200H0zM7.500 1.300L16 0v7.600H7.500zM0 8.400h6.700v6.200L0 13.700zM7.500 8.400H16V16l-8.500-1.300z" fill="#fff" />
        </svg>
      </div>
      <div className="w-[50px] flex items-center justify-center">
        <Search className="w-[18px] h-[18px] -scale-x-100" strokeWidth={1.300} />
      </div>
      <div className="ml-[5px] w-[40px] flex items-center justify-center border-b-2 border-[#80e0d2]">
        <svg viewBox="0 0 24 24" className="block w-6 h-6">
          <defs>
            <linearGradient id="edgeA" x1="0" y1="0" x2="1" y2="1">
              <stop offset="0" stopColor="#36c0d0" />
              <stop offset="1" stopColor="#7ed95a" />
            </linearGradient>
          </defs>
          <circle cx="12" cy="12" r="12" fill="#0f5fa8" />
          <path d="M1 9C3 2 10 0 14 0c6 0 10 5 10 11 0 3-3 4-6 4-2 0-3-1-3-2 2-2 1-7-4-7C6 6 3 7 1 9z" fill="url(#edgeA)" />
          <path d="M6 13c0 5 4 9 9 8-6 4-14-1-12-9 1-1 3-1 3 1z" fill="#1a8fd6" />
        </svg>
      </div>
      <div className="ml-[9px] w-[40px] flex items-center justify-center border-b-2 border-[#80e0d2]">
        <svg viewBox="0 0 24 24" className="block w-6 h-6">
          <path d="M1 3h8l2 2h12v4H1z" fill="#e8b23a" />
          <rect x="1" y="7" width="22" height="15" fill="#f8d56f" />
          <rect x="8" y="14" width="8" height="8" fill="#2f7fc8" />
          <rect x="10.500" y="18" width="3" height="4" fill="#f8d56f" />
        </svg>
      </div>
      <div className="ml-[9px] w-[40px] flex items-center justify-center">
        <svg viewBox="0 0 24 24" className="block w-6 h-6">
          <circle cx="12" cy="12" r="11.500" fill="#2a9bd8" />
          <path d="M5 12l13-5.500-2 11-4-3-2 2-.5-3.500 6-5-8 4.500z" fill="#fff" />
        </svg>
      </div>
      <div className="ml-[8px] w-[40px] flex items-center justify-center">
        <svg viewBox="0 0 24 24" className="block w-6 h-6">
          <path d="M1 23l1.700-6A10.800 10.800 0 1 1 7 21.300z" fill="#fff" />
          <path d="M3.500 20.500l1-3.800A9 9 0 1 1 7.300 19.500z" fill="#35b84b" />
          <path d="M8.500 7c-1 1-1.500 2.500 0 5s4 4.500 6 4.800c1.500.2 2.800-.8 3-2l-2.500-1.500-1.200 1.200c-1.500-.5-3-2-3.700-3.500l1-1.300L9.700 7z" fill="#fff" />
        </svg>
      </div>
      <div className="ml-[10px] w-[40px] flex items-center justify-center border-b-2 border-[#80e0d2]">
        <svg viewBox="0 0 24 24" className="block w-6 h-6">
          <rect x="9" y="3" width="14" height="18" fill="#f4f6fb" stroke="#2b579a" />
          <path d="M14 7h7M14 10h7M14 13h7M14 16h7" stroke="#2b579a" />
          <path d="M1 3.500L14 1v22L1 20.500z" fill="#2b579a" />
          <text x="7.500" y="15.500" textAnchor="middle" fontSize="10" fontWeight="700" fill="#fff" fontFamily="Liberation Sans">W</text>
        </svg>
      </div>
      <div className="ml-[5px] w-[48px] flex items-center justify-center bg-[#585654] border-b-2 border-[#80e0d2]">
        <svg viewBox="0 0 24 24" className="block w-6 h-6">
          <rect x="1" y="1" width="22" height="22" rx="2" fill="#f2d422" stroke="#a8912a" />
          <path d="M10 21l4-8 8 8z" fill="#a9c52e" />
          <path d="M12 3L6 21M12 3l6 18" stroke="#2c2c2c" strokeWidth="1" />
          <path d="M8 15h8" stroke="#2c2c2c" strokeWidth="0.7" />
          <circle cx="12" cy="5" r="1.500" fill="#2c2c2c" />
        </svg>
      </div>
      <div className="ml-auto flex items-stretch">
        <div className="w-[24px] flex items-center justify-center">
          <svg viewBox="0 0 12 7" className="block w-3 h-[7px]"><path d="M.5 6.500L6 1l5.500 5.500" fill="none" stroke="#fff" /></svg>
        </div>
        <div className="w-[24px] flex items-center justify-center">
          <svg viewBox="0 0 16 12" className="block w-4 h-3">
            <rect x="4.500" y="2.500" width="10" height="7" fill="none" stroke="#fff" />
            <rect x="6" y="4" width="7" height="4" fill="#fff" />
            <path d="M1 4h3M1.500 2v4" stroke="#fff" />
          </svg>
        </div>
        <div className="w-[25px] flex items-center justify-center">
          <svg viewBox="0 0 14 14" className="block w-[14px] h-[14px]">
            <path d="M1 13A12 12 0 0 1 13 1M3.500 13A9.500 9.500 0 0 1 13 3.500" fill="none" stroke="#777" />
            <path d="M6 13a7 7 0 0 1 5-6.500M8.500 13a4.500 4.500 0 0 1 2.500-3.500" fill="none" stroke="#ddd" />
            <circle cx="11.500" cy="12" r="1.300" fill="#fff" />
          </svg>
        </div>
        <div className="w-[22px] flex items-center justify-center">
          <svg viewBox="0 0 16 14" className="block w-4 h-[14px]">
            <path d="M1 5h3l4-3.500v11L4 9H1z" fill="none" stroke="#fff" />
            <path d="M10 5a3 3 0 0 1 0 4" fill="none" stroke="#fff" />
            <path d="M12 3a6 6 0 0 1 0 8M14 1.500a8.500 8.500 0 0 1 0 11" fill="none" stroke="#888" />
          </svg>
        </div>
        <div className="w-[38px] flex items-center justify-center text-[12px]">РУС</div>
        <div className="w-[64px] flex flex-col items-center justify-center text-[11px] leading-[17px]">
          <span>16:09</span>
          <span>31.12.2020</span>
        </div>
        <div className="ml-px w-[5px] border-l border-[#6a6a6a]" />
      </div>
    </div>
  );
}

export default function App() {
  return (
    <div className="w-[1920px] h-[1080px] flex flex-col overflow-hidden bg-[#f4f1dd] text-[11px] font-['Liberation_Sans',Arial,sans-serif]">
      {/* Title bar */}
      <div className="h-[23px] bg-white flex items-center shrink-0">
        <svg viewBox="0 0 16 16" className="block ml-[3px] w-[14px] h-[14px]">
          <rect x="0.500" y="0.500" width="15" height="15" rx="1" fill="#f2d422" stroke="#a8912a" />
          <path d="M7 15l3-6 5 6z" fill="#a9c52e" />
          <path d="M8 2L4 14M8 2l4 12" stroke="#2c2c2c" />
        </svg>
        <span className="ml-[6px] text-[#111] font-['Noto_Sans',sans-serif] text-[11.5px] flex-1">Конфигуратор (учебная версия) - Конфигурация</span>
        <svg viewBox="0 0 10 1" className="block w-[10px] h-px mr-[35px]"><rect width="10" height="1" fill="#111" /></svg>
        <svg viewBox="0 0 10 10" className="block w-[10px] h-[10px] mr-[36px]">
          <path d="M.5 2.500h7v7h-7zM2.500 2.500v-2h7v7h-2" fill="none" stroke="#111" />
        </svg>
        <svg viewBox="0 0 10 10" className="block w-[10px] h-[10px] mr-[20px]"><path d="M0 0l10 10M10 0L0 10" stroke="#111" /></svg>
      </div>

      <Menu />
      <Toolbars />

      {/* Work area */}
      <div className="h-[900px] flex shrink-0">
        <LeftPanel />
        <div className="relative flex-1 ml-[4px] mr-[6px] mb-[2px] bg-[#d8d4c0] border-l-2 border-t-2 border-[#7c7c7c]">
          <RegisterWindow pos="left-[109px] top-[68px]" title="Регистр накопления КоличествоТоваров" name="КоличествоТоваров" synonym="Количество товаров" kind="Остатки" />
          <RegisterWindow pos="left-[770px] top-[111px]" title="Регистр накопления ПродажаПоФилиалам" name="ПродажаПоФилиалам" synonym="Продажа по филиалам" kind="Обороты" active />
        </div>
        <PropertiesPanel />
      </div>

      {/* Window tabs */}
      <div className="h-[20px] flex pl-px gap-px text-[#333] shrink-0">
        <div className="w-[172px] flex items-center pl-[2px] bg-[#a9a9a9] border border-[#cfc9aa] whitespace-nowrap">
          <Coins className="w-[14px] h-[14px]" />
          <span className="ml-[2px]">Регистр накопления Количе...</span>
        </div>
        <div className="w-[172px] flex items-center pl-[2px] bg-[#b0c8e2] border border-[#cfc9aa] whitespace-nowrap text-[#3a4a5e]">
          <Coins className="w-[14px] h-[14px]" />
          <span className="ml-[2px]">Регистр накопления Прода...</span>
        </div>
      </div>

      {/* Status bar */}
      <div className="h-[19px] mt-[2px] flex gap-[5px] pl-px pr-px text-[#3f3a22] shrink-0">
        <div className="w-[1817px] pl-[3px] leading-[18px] border border-[#dcd8c2]">Для получения подсказки нажмите F1</div>
        <div className="w-[29px] text-center leading-[17px] border border-[#dcd8c2] text-[#c8b98f] shrink-0">CAP</div>
        <div className="w-[33px] text-center leading-[17px] border border-[#dcd8c2] text-[#c8b98f] shrink-0">NUM</div>
        <div className="w-[24px] flex items-center pl-[2px] border border-[#dcd8c2] text-[#333] shrink-0">
          ru
          <Caret className="ml-[2px]" />
        </div>
      </div>
      <div className="h-px shrink-0" />
      <Taskbar />
    </div>
  );
}
